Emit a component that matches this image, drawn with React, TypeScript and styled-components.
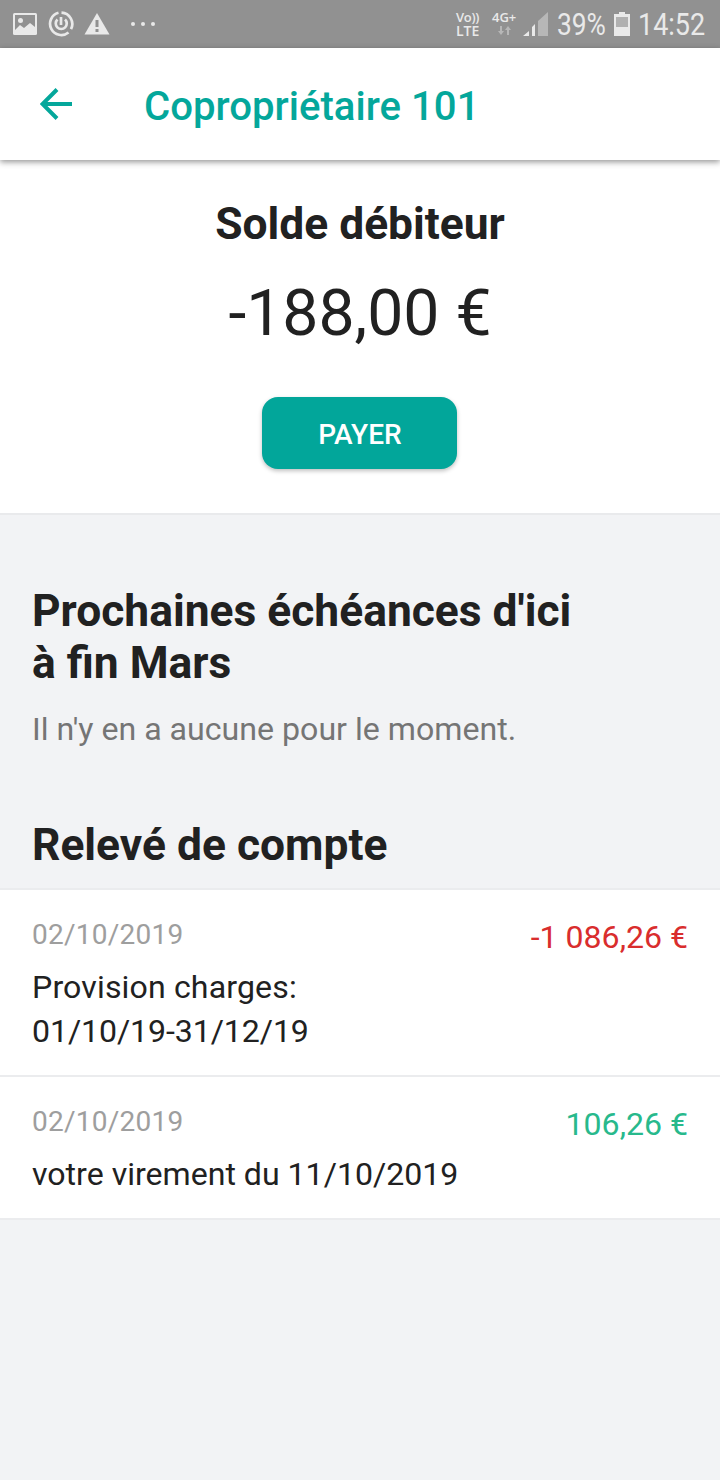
import React from 'react';
import styled, { createGlobalStyle } from 'styled-components';

const Global = createGlobalStyle`
  *{box-sizing:border-box}
  body{margin:0;background:#f2f3f5;font-family:Roboto,"Liberation Sans",sans-serif;color:#212121}
`;
const Screen = styled.div`width:720px;min-height:1480px;display:flex;flex-direction:column;background:#f2f3f5;`;
const StatusBar = styled.header`height:48px;background:#919191;display:flex;align-items:center;justify-content:space-between;color:#e9e9e9;padding:0 14px 0 12px;`;
const Notifications = styled.div`display:flex;align-items:center;gap:10px;`;
const Indicators = styled.div`display:flex;align-items:center;`;
const StatusText = styled.span<{ $width: number; $scale: number }>`
  width:${p => p.$width}px;font-size:31px;line-height:36px;margin-top:2px;white-space:nowrap;
  transform:scaleX(${p => p.$scale});transform-origin:left center;
`;
const Tiny = styled.span<{ $width: number }>`
  width:${p => p.$width}px;font:600 13px/13px "Open Sans",sans-serif;
  display:grid;grid-template-rows:13px 13px;white-space:nowrap;
`;
const Line = styled.span<{ $size?: number; $spacing?: number }>`
  line-height:13px;height:13px;font-size:${p => p.$size ?? 13}px;letter-spacing:${p => p.$spacing ?? 0}px;
`;
const Arrows = styled.svg`display:block;margin:2px 0 0 6px;`;
const Battery = styled.svg`margin:0 8px;`;
const Signal = styled.svg`margin-right:8px;`;
const AppBar = styled.nav`height:112px;background:#fff;display:flex;align-items:center;padding-left:40px;gap:72px;box-shadow:0 2px 6px rgba(0,0,0,.42);z-index:1;`;
const Title = styled.h1`margin:6px 0 0;font-size:40.15px;line-height:48px;font-weight:500;color:#04a79b;white-space:nowrap;`;
const Balance = styled.section`height:355px;background:#fff;border-bottom:2px solid #e9eaec;display:flex;flex-direction:column;align-items:center;padding-top:38px;`;
const Heading = styled.h2`margin:0;font-size:44.36px;line-height:52px;font-weight:700;white-space:nowrap;`;
const Amount = styled.div`font-size:64.3px;line-height:76px;margin-top:25px;white-space:nowrap;`;
const PayButton = styled.button`margin:46px 1px 0 0;width:195px;height:72px;border:0;border-radius:16px;background:#02a69a;color:#fff;font:500 28px/72px Roboto,sans-serif;padding:2px 0 0 1px;box-shadow:0 2px 4px rgba(0,0,0,.25);`;
const Block = styled.section<{ $top: number }>`padding:${p => p.$top}px 32px 0;`;
const Note = styled.p`margin:20px 0 0;font-size:32.13px;line-height:40px;color:#757575;white-space:nowrap;`;
const List = styled.ul`list-style:none;margin:17px 0 0;padding:0;border-top:2px solid #ebecee;`;
const Row = styled.li<{ $height: number }>`height:${p => p.$height}px;background:#fff;border-bottom:2px solid #ebecee;padding:26px 32px 0;display:flex;justify-content:space-between;`;
const DateText = styled.div`font-size:28px;line-height:38px;color:#9e9e9e;letter-spacing:.25px;`;
const Label = styled.div`font-size:32.1px;line-height:44px;margin-top:11px;`;
const LabelLine = styled.div<{ $spacing?: number }>`letter-spacing:${p => p.$spacing ?? 0}px;white-space:nowrap;`;
const Value = styled.div<{ $positive?: boolean }>`font-size:32.1px;line-height:44px;margin-top:-1px;color:${p => (p.$positive ? '#28b98c' : '#d92d2d')};white-space:nowrap;`;

export default function App() {
  return (
    <Screen>
      <Global />
      <StatusBar>
        <Notifications>
          <svg width="26" height="24" viewBox="0 0 26 24"><path fill="#e9e9e9" d="M2.500 1h21q1.500 0 1.500 1.500v19q0 1.500-1.500 1.500h-21Q1 23 1 21.500v-19Q1 1 2.500 1Z" /><path fill="#919191" d="M3 3h20v12l-5-4-6 5-4-3-5 5Z" /><circle cx="8.500" cy="8.500" r="2.500" fill="#e9e9e9" /></svg>
          <svg width="26" height="28" viewBox="0 0 26 28" fill="none" stroke="#e9e9e9" strokeWidth="2.700"><path d="M10.500 2.800A11.300 11.300 0 1 0 20.500 22.500M13.500 2.700a11.300 11.300 0 0 1 9.500 16.500" /><path d="M9.500 9.500a5.500 5.500 0 1 0 7.500 0M13 7v8" /></svg>
          <svg width="26" height="24" viewBox="0 0 26 24"><path fill="#e9e9e9" d="M13 1 25.500 22.500H.5Z" /><path stroke="#919191" strokeWidth="3" d="M13 8v7M13 17v3" /></svg>
          <svg width="36" height="6" viewBox="0 0 36 6" fill="#e9e9e9"><circle cx="13" cy="3" r="2" /><circle cx="23" cy="3" r="2" /><circle cx="33" cy="3" r="2" /></svg>
        </Notifications>
        <Indicators>
          <Tiny $width={36}><Line $spacing={-0.3}>Vo))</Line><Line $size={14}>LTE</Line></Tiny>
          <Tiny $width={31}>
            <Line>4G+</Line>
            <Arrows width="13" height="9" viewBox="0 0 13 9" fill="#b7b7b7"><path d="M2 0h2v5h2L3 9 0 5h2ZM9 9h2V4h2l-3-4-3 4h2Z" /></Arrows>
          </Tiny>
          <Signal width="26" height="24" viewBox="0 0 26 24"><path fill="#b7b7b7" d="M15 9 25 0v24H15Z" /><path fill="#e9e9e9" d="M0 24l6-5v5ZM9 15l3-3v12H9Z" /></Signal>
          <StatusText $width={49} $scale={0.85}>39%</StatusText>
          <Battery width="16" height="24" viewBox="0 0 16 24"><path fill="#e9e9e9" d="M5 0h6v2h5v22H0V2h5Z" /><path fill="#b0b0b0" d="M2 5h12v10H2Z" /></Battery>
          <StatusText $width={68} $scale={0.87}>14:52</StatusText>
        </Indicators>
      </StatusBar>
      <AppBar>
        <svg width="32" height="32" viewBox="0 0 32 32" fill="none" stroke="#04a79b" strokeWidth="4"><path d="M32 16H3M17 1.500 2.500 16 17 30.500" /></svg>
        <Title>Copropriétaire 101</Title>
      </AppBar>
      <Balance>
        <Heading>Solde débiteur</Heading>
        <Amount>-188,00 €</Amount>
        <PayButton>PAYER</PayButton>
      </Balance>
      <Block $top={70}>
        <Heading>Prochaines échéances d'ici<br />à fin Mars</Heading>
        <Note>Il n'y en a aucune pour le moment.</Note>
      </Block>
      <Block $top={70}><Heading>Relevé de compte</Heading></Block>
      <List>
        <Row $height={187}>
          <div>
            <DateText>02/10/2019</DateText>
            <Label>
              <LabelLine $spacing={0.14}>Provision charges:</LabelLine>
              <LabelLine $spacing={-0.08}>01/10/19-31/12/19</LabelLine>
            </Label>
          </div>
          <Value>-1 086,26 €</Value>
        </Row>
        <Row $height={143}>
          <div><DateText>02/10/2019</DateText><Label><LabelLine>votre virement du 11/10/2019</LabelLine></Label></div>
          <Value $positive>106,26 €</Value>
        </Row>
      </List>
    </Screen>
  );
}
